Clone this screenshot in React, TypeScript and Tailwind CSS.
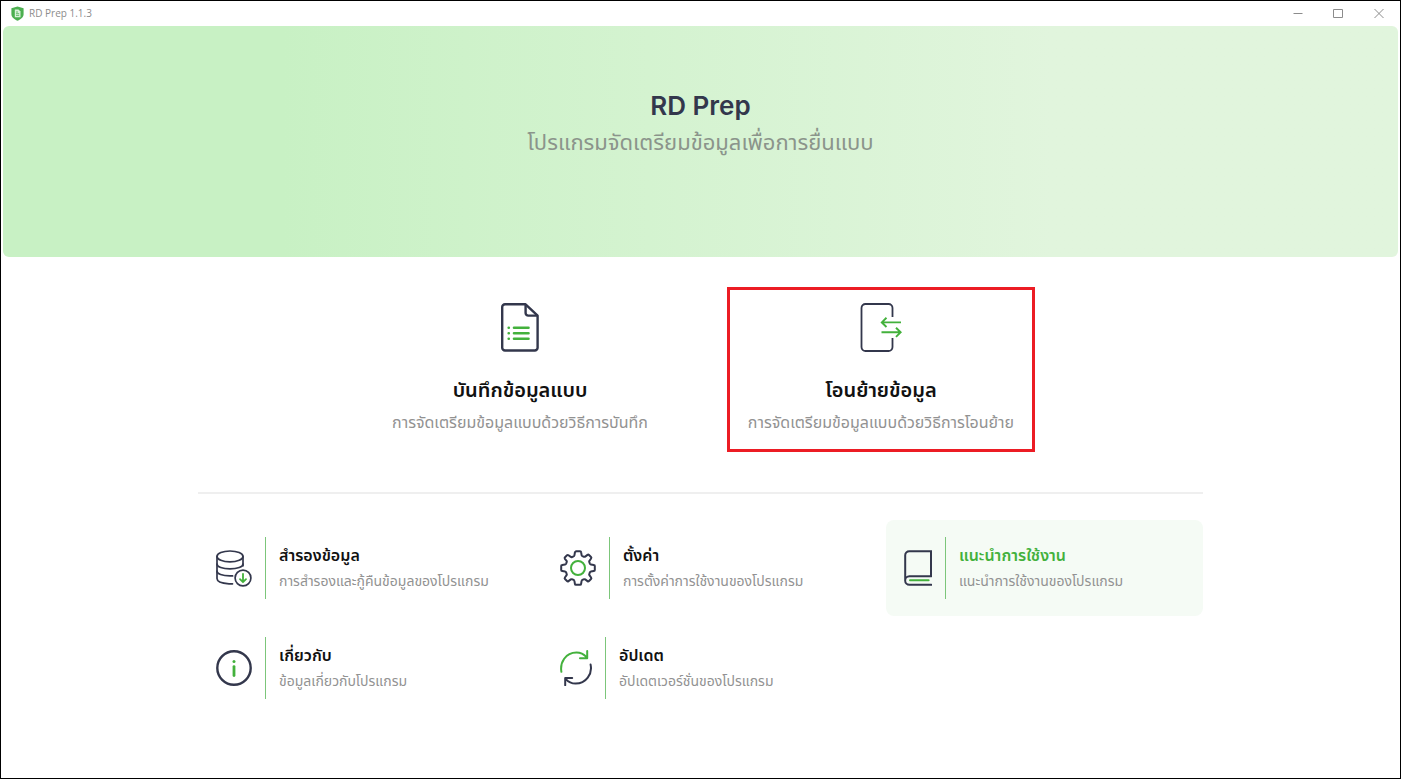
import type { ReactNode } from "react";
import clsx from "clsx";

const NAVY = "#33374c";
const GREEN = "#43b13c";

const ShieldLogo = () => (
  <svg width="13" height="15" viewBox="0 0 13 15" aria-hidden="true">
    <path
      d="M6.5 0.4 12.6 2.3V8c0 3.2-2.7 5.3-6.1 6.7C3.1 13.3 0.4 11.2 0.4 8V2.3z"
      fill="#4caf50"
    />
    <path d="M3.8 3.4h3.7l2 2v5.8H3.8z" fill="#d9f2da" />
    <path d="M5 6h2M5 7.7h3.2M5 9.4h3.2" stroke="#4caf50" strokeWidth="0.8" />
  </svg>
);

const DocumentIcon = () => (
  <svg width="38" height="49" viewBox="0 0 38 49" fill="none" aria-hidden="true">
    <path
      d="M24.6 1.3H4a2.8 2.8 0 0 0-2.8 2.8v40.6A2.8 2.8 0 0 0 4 47.5h29.8a2.8 2.8 0 0 0 2.8-2.8V12.6z"
      stroke={NAVY}
      strokeWidth="2.4"
      strokeLinejoin="round"
    />
    <path
      d="M24.6 1.3v8.6a2.7 2.7 0 0 0 2.7 2.7h9.3"
      stroke={NAVY}
      strokeWidth="2.4"
      strokeLinejoin="round"
    />
    <path
      d="M13 24.8h14.5M13 30.3h14.5M13 35.8h14.5M7.7 24.8h.1M7.7 30.3h.1M7.7 35.8h.1"
      stroke={GREEN}
      strokeWidth="2.6"
      strokeLinecap="round"
    />
  </svg>
);

const TransferIcon = () => (
  <svg width="42" height="49" viewBox="0 0 42 49" fill="none" aria-hidden="true">
    <path
      d="M32.5 14V5a4 4 0 0 0-4-4H5.5a4 4 0 0 0-4 4v39a4 4 0 0 0 4 4h23a4 4 0 0 0 4-4v-9"
      stroke={NAVY}
      strokeWidth="1.8"
    />
    <path
      d="M41 19.4H22m4.5-4.6-4.7 4.6 4.7 4.6M21.5 29.3h19m-4.5-4.6 4.7 4.6-4.7 4.6"
      stroke={GREEN}
      strokeWidth="1.9"
    />
  </svg>
);

const DatabaseIcon = () => (
  <svg width="36" height="37" viewBox="0 0 36 37" fill="none" aria-hidden="true">
    <g stroke={NAVY} strokeWidth="1.7" strokeLinecap="round">
      <ellipse cx="14" cy="6.4" rx="13" ry="5.4" />
      <path d="M1 6.4v22.2c0 2.8 5 4.8 12 5.2h3.5M27 6.4v9.4" />
      <path d="M1 14c0 2.8 5.6 4.8 13 4.8s13-2 13-4.8M1 21.2c0 2.6 5.3 4.6 13 4.7h2.6" />
      <circle cx="27" cy="28" r="7.9" />
    </g>
    <path
      d="M27 23.8v8.2m-3-2.8 3 3 3-3"
      stroke={GREEN}
      strokeWidth="1.8"
      strokeLinecap="round"
      strokeLinejoin="round"
    />
  </svg>
);

const GearIcon = () => (
  <svg width="36" height="36" viewBox="0 0 36 36" fill="none" aria-hidden="true">
    <path
      d="M16 1.2h4q1 0 1.1 1l.5 2.9q.1.7.8 1l1.5.6q.7.3 1.3-.1l2.3-1.7q.8-.6 1.5.1l2 2q.7.7.1 1.5l-1.7 2.3q-.4.6-.1 1.3l.6 1.5q.3.7 1 .8l2.9.5q1 .1 1 1.1v4q0 1-1 1.1l-2.9.5q-.7.1-1 .8l-.6 1.5q-.3.7.1 1.3l1.7 2.3q.6.8-.1 1.5l-2 2q-.7.7-1.5.1l-2.3-1.7q-.6-.4-1.3-.1l-1.5.6q-.7.3-.8 1l-.5 2.9q-.1 1-1.1 1h-4q-1 0-1.1-1l-.5-2.9q-.1-.7-.8-1l-1.5-.6q-.7-.3-1.3.1l-2.3 1.7q-.8.6-1.5-.1l-2-2q-.7-.7-.1-1.5l1.7-2.3q.4-.6.1-1.3l-.6-1.5q-.3-.7-1-.8l-2.9-.5q-1-.1-1-1.1v-4q0-1 1-1.1l2.9-.5q.7-.1 1-.8l.6-1.5q.3-.7-.1-1.3L4.9 8.8q-.6-.8.1-1.5l2-2q.7-.7 1.5-.1l2.3 1.7q.6.4 1.3.1l1.5-.6q.7-.3.8-1l.5-2.9q.1-1 1.1-1z"
      stroke={NAVY}
      strokeWidth="2"
      strokeLinejoin="round"
    />
    <circle cx="18" cy="18" r="7" stroke={GREEN} strokeWidth="2" />
  </svg>
);

const BookIcon = () => (
  <svg width="28" height="36" viewBox="0 0 28 36" fill="none" aria-hidden="true">
    <path
      d="M27 26.3V1.2H5.2a4 4 0 0 0-4 4v25.2M27.4 34.8H5.4a4.2 4.2 0 0 1 0-8.5H27.2"
      stroke={NAVY}
      strokeWidth="2"
      strokeLinecap="round"
    />
    <path d="M6 30.2h18.6" stroke={GREEN} strokeWidth="2" strokeLinecap="round" />
  </svg>
);

const InfoIcon = () => (
  <svg width="36" height="36" viewBox="0 0 36 36" fill="none" aria-hidden="true">
    <circle cx="18" cy="18" r="16.7" stroke={NAVY} strokeWidth="2.4" />
    <path d="M18 16.6v9" stroke={GREEN} strokeWidth="2.8" strokeLinecap="round" />
    <circle cx="18" cy="11.4" r="1.5" fill={GREEN} />
  </svg>
);

const RefreshIcon = () => (
  <svg width="32" height="36" viewBox="0 0 32 36" fill="none" aria-hidden="true">
    <path
      d="M1.4 21.8C-.2 12.6 5.4 2.6 16.5 2.6c4 0 7.3 1.6 10 4.6M27.2 1v7.2H20"
      stroke={GREEN}
      strokeWidth="2"
      strokeLinecap="round"
      strokeLinejoin="round"
    />
    <path
      d="M30.6 14.6C32.6 24 26 33.6 15.6 33.6c-4 0-7.4-1.8-10-4.8M5.2 35.2v-7.1h7"
      stroke={NAVY}
      strokeWidth="2"
      strokeLinecap="round"
      strokeLinejoin="round"
    />
  </svg>
);

interface CardProps {
  icon: ReactNode;
  title: string;
  text: string;
  active?: boolean;
}

const MainCard = ({ icon, title, text, active }: CardProps) => (
  <button
    type="button"
    className={clsx(
      "flex w-[308px] flex-col items-center border-3 px-2 py-[13px]",
      active ? "border-[#ec1c24]" : "border-transparent",
    )}
  >
    {icon}
    <span className="mt-5 text-[20px] leading-9 font-semibold text-[#111111]">{title}</span>
    <span className="text-[16px] leading-7 whitespace-nowrap text-[#929292]">{text}</span>
  </button>
);

const MenuCard = ({ icon, title, text, active }: CardProps) => (
  <button
    type="button"
    className={clsx(
      "flex h-24 items-center rounded-lg px-[18px] text-left",
      active && "bg-[#f5fbf5]",
    )}
  >
    <span className="shrink-0">{icon}</span>
    <span className="ml-[13px] flex h-[62px] flex-col justify-center border-l border-[#7cc67a] pl-[13px]">
      <span
        className={clsx(
          "text-[16px] leading-[26px] font-semibold",
          active ? "text-[#43b13c]" : "text-[#111111]",
        )}
      >
        {title}
      </span>
      <span className="text-[14px] leading-[26px] whitespace-nowrap text-[#929292]">{text}</span>
    </span>
  </button>
);

const TitleBar = () => (
  <header className="flex h-[25px] items-center pl-[10px] text-[#8c8c8c]">
    <ShieldLogo />
    <span className="ml-[5px] font-['Open_Sans'] text-[10px]">RD Prep 1.1.3</span>
    <div className="ml-auto flex">
      <button type="button" aria-label="Minimize" className="flex h-6 w-10 items-center justify-center">
        <svg width="10" height="10" viewBox="0 0 10 10" stroke="currentColor">
          <path d="M0.5 4.5h9" />
        </svg>
      </button>
      <button type="button" aria-label="Maximize" className="flex h-6 w-10 items-center justify-center">
        <svg width="10" height="10" viewBox="0 0 10 10" stroke="currentColor" fill="none">
          <path d="M0.5 0.5h9v8h-9z" />
        </svg>
      </button>
      <button type="button" aria-label="Close" className="flex h-6 w-[42px] items-center justify-center">
        <svg width="10" height="10" viewBox="0 0 10 10" stroke="currentColor">
          <path d="M0.5 0l9 9M9.5 0l-9 9" />
        </svg>
      </button>
    </div>
  </header>
);

export default function App() {
  return (
    <div className="min-h-screen border border-black bg-white font-['Inter','Noto_Sans_Thai',sans-serif]">
      <TitleBar />

      {/* banner */}
      <section className="mx-0.5 flex h-[231px] flex-col items-center rounded-md bg-linear-to-r from-[#c8f1c4] from-20% to-[#e1f5dd] to-75% pt-[62px]">
        <h1 className="text-[26px] leading-9 font-semibold text-[#33374c]">RD Prep</h1>
        <p className="text-[22px] leading-9 text-[#8b948b]">โปรแกรมจัดเตรียมข้อมูลเพื่อการยื่นแบบ</p>
      </section>

      <main className="mx-auto max-w-[1005px]">
        <div className="flex justify-center gap-[53px] pt-[30px] pb-10">
          <MainCard
            icon={<DocumentIcon />}
            title="บันทึกข้อมูลแบบ"
            text="การจัดเตรียมข้อมูลแบบด้วยวิธีการบันทึก"
          />
          <MainCard
            icon={<TransferIcon />}
            title="โอนย้ายข้อมูล"
            text="การจัดเตรียมข้อมูลแบบด้วยวิธีการโอนย้าย"
            active
          />
        </div>

        <hr className="border-t-2 border-[#efefef]" />

        <nav className="grid grid-cols-3 gap-x-[27px] gap-y-1 pt-[26px]">
          <MenuCard
            icon={<DatabaseIcon />}
            title="สำรองข้อมูล"
            text="การสำรองและกู้คืนข้อมูลของโปรแกรม"
          />
          <MenuCard icon={<GearIcon />} title="ตั้งค่า" text="การตั้งค่าการใช้งานของโปรแกรม" />
          <MenuCard
            icon={<BookIcon />}
            title="แนะนำการใช้งาน"
            text="แนะนำการใช้งานของโปรแกรม"
            active
          />
          <MenuCard icon={<InfoIcon />} title="เกี่ยวกับ" text="ข้อมูลเกี่ยวกับโปรแกรม" />
          <MenuCard icon={<RefreshIcon />} title="อัปเดต" text="อัปเดตเวอร์ชั่นของโปรแกรม" />
        </nav>
      </main>
    </div>
  );
}
